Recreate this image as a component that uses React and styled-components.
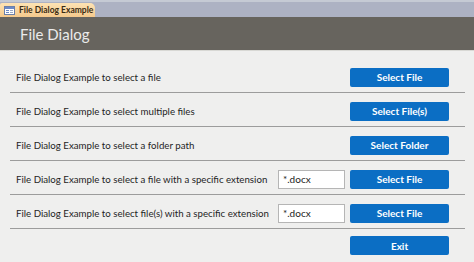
import React from 'react'
import styled, { createGlobalStyle } from 'styled-components'

const GlobalStyle = createGlobalStyle`
  html, body {
    margin: 0;
    padding: 0;
    background: #efefee;
  }
  body {
    font-family: Lato, "Open Sans", sans-serif;
  }
`

const TabStrip = styled.div`
  height: 17px;
  background: #adb2c3;
  border-top: 2px solid #c5cad4;
  box-sizing: border-box;
  display: flex;
  align-items: flex-end;
`

const Tab = styled.div`
  height: 14px;
  width: 95px;
  box-sizing: border-box;
  padding-left: 4px;
  display: flex;
  align-items: center;
  gap: 4px;
  background: linear-gradient(#fde3b4, #f5c98c);
  border-radius: 2px 5px 0 0;
  font-size: 8.5px;
  font-weight: 700;
  color: #3b2c14;
  white-space: nowrap;
`

const Header = styled.div`
  height: 33px;
  background: #67645e;
  display: flex;
  align-items: center;
  padding-left: 20px;
  font-family: Lato, "Open Sans", sans-serif;
  font-size: 15px;
  color: #ebebeb;
  border-bottom: 1px solid #d8d8d4;
`

const Body = styled.div`
  padding: 8px 9px 0 10px;
`

const Row = styled.div`
  height: 34px;
  box-sizing: border-box;
  padding: 3px 16px 0 6px;
  display: flex;
  align-items: center;
  border-bottom: 1px solid #9c9c9c;
  font-size: 9.7px;
  color: #1e1e1e;
`

const Label = styled.span`
  flex: 1;
  white-space: nowrap;
`

const Button = styled.button`
  width: 99px;
  height: 19px;
  border: none;
  border-radius: 2px;
  background: #0b6ec4;
  color: #fff;
  font-family: Lato, "Open Sans", sans-serif;
  font-size: 10px;
  font-weight: 700;
  padding: 0;
  margin-left: ${p => (p.$gap ? '5px' : '0')};
`

const Ext = styled.input`
  width: 67px;
  height: 19px;
  box-sizing: border-box;
  border: 1px solid #b5b5b5;
  background: #fff;
  font-family: Lato, "Open Sans", sans-serif;
  font-size: 10px;
  color: #222;
  padding: 0 4px;
`

const Footer = styled.div`
  display: flex;
  justify-content: flex-end;
  padding: 7px 16px 0 0;
`

const rows = [
  { label: 'File Dialog Example to select a file', button: 'Select File' },
  { label: 'File Dialog Example to select multiple files', button: 'Select File(s)' },
  { label: 'File Dialog Example to select a folder path', button: 'Select Folder' },
  { label: 'File Dialog Example to select a file with a specific extension', button: 'Select File', ext: true },
  { label: 'File Dialog Example to select file(s) with a specific extension', button: 'Select File', ext: true },
]

function FormIcon() {
  return (
    <svg width="11" height="9" viewBox="0 0 11 9">
      <rect x="0.5" y="0.5" width="10" height="8" fill="#fff" stroke="#6b7fa8" />
      <rect x="1" y="1" width="9" height="2" fill="#6c89c6" />
      <rect x="2" y="4" width="3" height="1" fill="#6c89c6" />
      <rect x="6" y="4" width="3" height="1" fill="#9aa8c4" />
      <rect x="2" y="6" width="3" height="1" fill="#6c89c6" />
      <rect x="6" y="6" width="3" height="1" fill="#9aa8c4" />
    </svg>
  )
}

export default function App() {
  return (
    <>
      <GlobalStyle />
      <TabStrip>
        <Tab>
          <FormIcon />
          File Dialog Example
        </Tab>
      </TabStrip>
      <Header>File Dialog</Header>
      <Body>
        {rows.map((r, i) => (
          <Row key={i}>
            <Label>{r.label}</Label>
            {r.ext && <Ext defaultValue="*.docx" />}
            <Button $gap={r.ext}>{r.button}</Button>
          </Row>
        ))}
        <Footer>
          <Button>Exit</Button>
        </Footer>
      </Body>
    </>
  )
}
